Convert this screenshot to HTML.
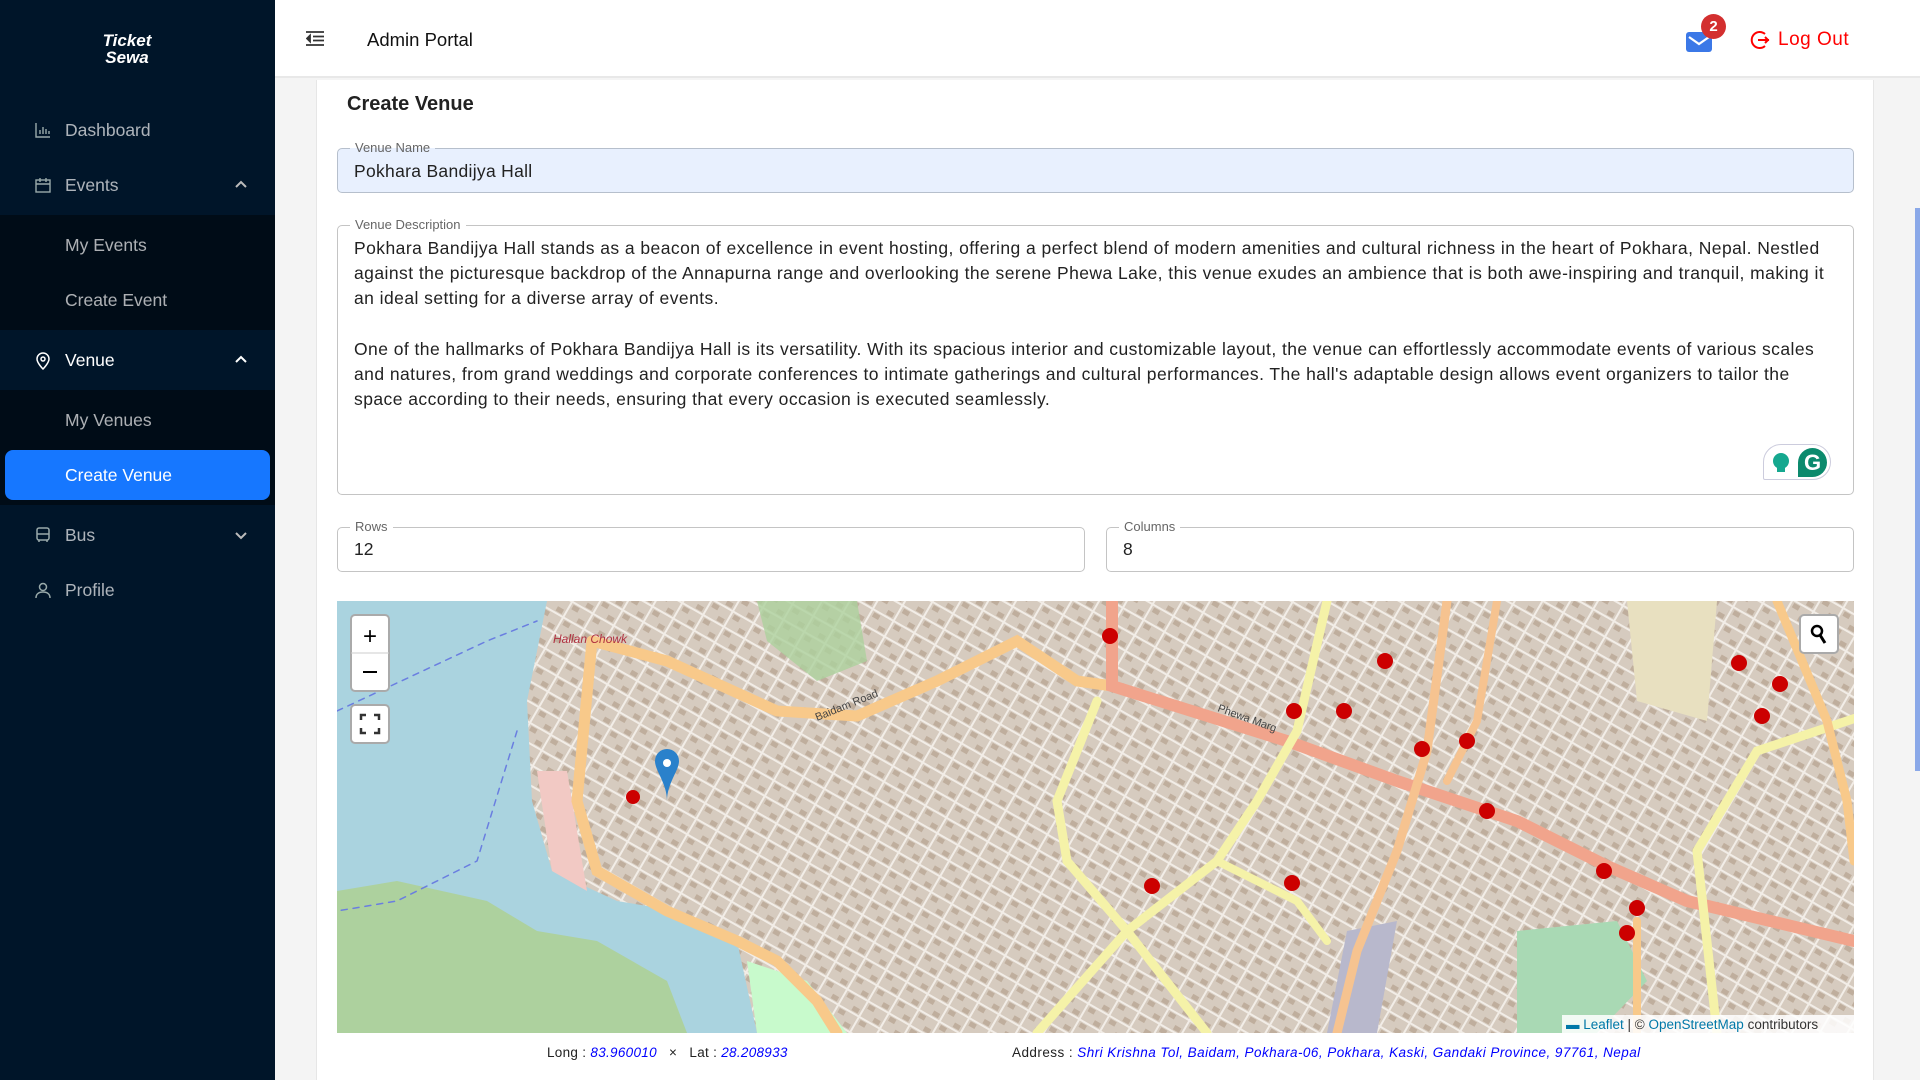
<!DOCTYPE html>
<html><head><meta charset="utf-8"><style>
*{box-sizing:border-box;margin:0;padding:0}
body{width:1920px;height:1080px;overflow:hidden;font-family:"Liberation Sans",sans-serif;background:#f4f4f4;position:relative}
.sb{position:absolute;left:0;top:0;width:275px;height:1080px;background:#001529}
.logo{position:absolute;left:97px;top:32px;color:#fff;font-style:italic;font-weight:bold;font-size:17px;line-height:17px;text-align:center;width:60px}
.mi{position:absolute;left:0;width:275px;height:55px;color:rgba(255,255,255,.68);font-size:17.5px;line-height:55px;padding-left:65px}
.mi svg{position:absolute;left:35px;top:19px}
.mi .ch{position:absolute;left:235px;top:22px}
.sub{position:absolute;left:0;width:275px;background:#000c17}
.hd{position:absolute;left:275px;top:0;width:1645px;height:78px;background:#fff;border-bottom:2px solid #e8e8e8}
.card{position:absolute;left:316px;top:80px;width:1558px;height:1000px;background:#fff;border-left:1px solid #e6e6e6;border-right:1px solid #e6e6e6}
.fld{position:absolute;border:1px solid #c4c4c4;border-radius:5px;font-size:17.5px;color:#222}
.lbl{position:absolute;top:-9px;left:12px;background:#fff;padding:0 5px;font-size:13px;color:#666;line-height:16px}
</style></head><body>
<div class="sb">
 <div class="logo">Ticket<br>Sewa</div>
 <div class="mi" style="top:103px"><svg width="16" height="16" viewBox="0 0 16 16" fill="none" stroke="#9aa" stroke-width="1.4"><path d="M1 1v14h14M5 12V8M8 12V5M11 12V7M14 12V9"/></svg>Dashboard</div>
 <div class="mi" style="top:158px"><svg width="16" height="16" viewBox="0 0 16 16" fill="none" stroke="#9aa" stroke-width="1.4"><rect x="1" y="3" width="14" height="12"/><path d="M1 7h14M5 1v4M11 1v4"/></svg>Events<svg class="ch" width="12" height="10" viewBox="0 0 12 10" fill="none" stroke="#bbb" stroke-width="2"><path d="M1 7l5-5 5 5"/></svg></div>
 <div class="sub" style="top:215px;height:115px">
  <div class="mi" style="top:3px">My Events</div>
  <div class="mi" style="top:58px">Create Event</div>
 </div>
 <div class="mi" style="top:333px;color:#fff"><svg width="16" height="18" viewBox="0 0 16 18" fill="none" stroke="#fff" stroke-width="1.5"><path d="M8 17s6-6 6-10A6 6 0 0 0 2 7c0 4 6 10 6 10z"/><circle cx="8" cy="7" r="2"/></svg>Venue<svg class="ch" width="12" height="10" viewBox="0 0 12 10" fill="none" stroke="#fff" stroke-width="2"><path d="M1 7l5-5 5 5"/></svg></div>
 <div class="sub" style="top:390px;height:115px">
  <div class="mi" style="top:3px">My Venues</div>
  <div style="position:absolute;left:5px;top:60px;width:265px;height:50px;background:#1677ff;border-radius:8px;color:#fff;font-size:17.5px;line-height:50px;padding-left:60px">Create Venue</div>
 </div>
 <div class="mi" style="top:508px"><svg width="16" height="16" viewBox="0 0 16 16" fill="none" stroke="#9aa" stroke-width="1.5"><rect x="2" y="1" width="12" height="12" rx="2"/><path d="M2 7h12M4 13v2M12 13v2"/></svg>Bus<svg class="ch" width="12" height="10" viewBox="0 0 12 10" fill="none" stroke="#bbb" stroke-width="2"><path d="M1 3l5 5 5-5"/></svg></div>
 <div class="mi" style="top:563px"><svg width="16" height="16" viewBox="0 0 16 16" fill="none" stroke="#9aa" stroke-width="1.5"><circle cx="8" cy="5" r="3.5"/><path d="M1 16c0-4 3-6 7-6s7 2 7 6"/></svg>Profile</div>
</div>
<div class="hd">
 <svg style="position:absolute;left:31px;top:31px" width="18" height="15" viewBox="0 0 18 15" fill="none" stroke="#333" stroke-width="1.8"><path d="M0 1h18M7 5.5h11M7 9.5h11M0 14h18"/><path d="M4 4.5L1 7.5 4 10.5z" fill="#333"/></svg>
 <div style="position:absolute;left:92px;top:29px;font-size:18.5px;color:#111">Admin Portal</div>
 <div style="position:absolute;left:1411px;top:32px;width:26px;height:20px;background:#3b78e7;border-radius:3px"><svg width="26" height="20"><path d="M3 5l10 7 10-7" fill="none" stroke="#fff" stroke-width="2.2"/></svg></div>
 <div style="position:absolute;left:1426px;top:14px;width:25px;height:25px;background:#d32f2f;border-radius:50%;color:#fff;font-size:15px;font-weight:bold;text-align:center;line-height:25px">2</div>
 <svg style="position:absolute;left:1473px;top:29px" width="22" height="22" viewBox="0 0 22 22" fill="none" stroke="#f00" stroke-width="2"><path d="M17 5A8 8 0 1 0 17 17"/><path d="M10 11h11M17 8l3 3-3 3"/></svg>
 <div style="position:absolute;left:1503px;top:29px;font-size:19px;color:#f00;letter-spacing:.5px">Log Out</div>
</div>
<div style="position:absolute;right:0;top:208px;width:5px;height:563px;background:#8aa8e8"></div>
<div class="card">
 <div style="position:absolute;left:30px;top:13px;font-size:20px;font-weight:bold;color:#222">Create Venue</div>
 <div class="fld" style="left:20px;top:68px;width:1517px;height:45px;background:#e8f0fe;border-color:#b6bfcc"><span class="lbl" style="background:linear-gradient(#fff 50%,#e8f0fe 50%)">Venue Name</span><div style="padding:12px 16px;letter-spacing:.3px">Pokhara Bandijya Hall</div></div>
 <div class="fld" style="left:20px;top:145px;width:1517px;height:270px"><span class="lbl">Venue Description</span>
  <div style="padding:10px 16px;line-height:25.2px;letter-spacing:.44px">Pokhara Bandijya Hall stands as a beacon of excellence in event hosting, offering a perfect blend of modern amenities and cultural richness in the heart of Pokhara, Nepal. Nestled against the picturesque backdrop of the Annapurna range and overlooking the serene Phewa Lake, this venue exudes an ambience that is both awe-inspiring and tranquil, making it an ideal setting for a diverse array of events.<br><br>One of the hallmarks of Pokhara Bandijya Hall is its versatility. With its spacious interior and customizable layout, the venue can effortlessly accommodate events of various scales and natures, from grand weddings and corporate conferences to intimate gatherings and cultural performances. The hall's adaptable design allows event organizers to tailor the space according to their needs, ensuring that every occasion is executed seamlessly.</div>
  <div style="position:absolute;left:1425px;top:218px;width:68px;height:36px;border:1px solid #ccd;border-radius:18px 18px 18px 2px;background:#fff">
   <div style="position:absolute;left:9px;top:8px;width:16px;height:16px;border-radius:50%;background:#15a88f"></div><div style="position:absolute;left:13px;top:22px;width:8px;height:5px;background:#15a88f"></div>
   <div style="position:absolute;left:34px;top:3px;width:29px;height:29px;border-radius:50% 50% 50% 0;background:#0c8a6d;color:#fff;font-weight:bold;font-size:22px;text-align:center;line-height:29px">G</div>
  </div>
 </div>
 <div class="fld" style="left:20px;top:447px;width:748px;height:45px"><span class="lbl">Rows</span><div style="padding:11px 16px">12</div></div>
 <div class="fld" style="left:789px;top:447px;width:748px;height:45px"><span class="lbl">Columns</span><div style="padding:11px 16px">8</div></div>
 <svg style="position:absolute;left:20px;top:521px" width="1517" height="432" viewBox="0 0 1517 432">
  <defs><pattern id="p" width="24" height="18" patternUnits="userSpaceOnUse" patternTransform="rotate(30)"><rect width="24" height="18" fill="#d6cbbf"/><path d="M0 9h24M12 0v18" stroke="#f2ede7" stroke-width="2"/><rect x="2" y="2" width="7" height="5" fill="#bfae9d"/><rect x="15" y="11" width="7" height="5" fill="#bfae9d"/></pattern></defs>
  <rect width="1517" height="432" fill="url(#p)"/>
  <path d="M0 0H210L190 100 195 200 215 270 280 300 340 310 400 340 420 432H0Z" fill="#aad3df"/>
  <path d="M0 290L60 280 150 300 200 330 260 340 330 380 350 432H0Z" fill="#add19e"/>
  <path d="M410 360L470 380 510 432H420Z" fill="#c8facc"/>
  <path d="M200 170L230 170 250 290 215 270Z" fill="#f2c9c4"/>
  <path d="M420 0L520 0 530 60 480 80 430 40Z" fill="#add19e" opacity=".8"/>
  <path d="M1180 330L1280 320 1310 380 1260 432H1180Z" fill="#a9d9b4"/>
  <path d="M1010 330L1060 320 1040 432H990Z" fill="#b8b8cc"/>
  <path d="M1290 0H1380L1370 120 1300 100Z" fill="#e8e0c0"/>
  <g fill="none" stroke-linecap="round">
   <path d="M255 40L330 60 440 110 520 115 600 80 680 40 740 80 775 85" stroke="#f8c98a" stroke-width="11"/>
   <path d="M255 40L240 200 260 270 330 310 400 340 440 360 480 400 500 432" stroke="#f8c98a" stroke-width="11"/>
   <path d="M775 0L775 85 950 140 1060 180 1180 220 1270 265 1350 300 1517 340" stroke="#f1a48c" stroke-width="12"/>
   <path d="M990 0L960 130 920 200 880 260 790 330 700 432" stroke="#f5f2a8" stroke-width="9"/>
   <path d="M760 100L720 200 730 260 790 330 870 432" stroke="#f5f2a8" stroke-width="9"/>
   <path d="M880 260L960 300 990 340" stroke="#f5f2a8" stroke-width="8"/>
   <path d="M1110 0L1090 150 1060 250 1020 350 1000 432" stroke="#f6c390" stroke-width="9"/>
   <path d="M1160 0L1140 120 1110 180" stroke="#f6c390" stroke-width="8"/>
   <path d="M1540 110L1420 150 1360 250 1380 432" stroke="#f5f2a8" stroke-width="9"/>
   <path d="M1440 0L1490 120 1510 200 1517 260" stroke="#f8c98a" stroke-width="9"/>
   <path d="M1300 320L1300 432" stroke="#f8c98a" stroke-width="8"/>
   <path d="M180 130L140 260 60 300 0 310M0 110L150 40 200 20" stroke="#6a7ee0" stroke-width="1.5" stroke-dasharray="6 6"/>
  </g>
  <g fill="#c00">
   <circle cx="773" cy="35" r="8"/><circle cx="957" cy="110" r="8"/><circle cx="1007" cy="110" r="8"/><circle cx="1048" cy="60" r="8"/><circle cx="1085" cy="148" r="8"/><circle cx="1130" cy="140" r="8"/><circle cx="1150" cy="210" r="8"/><circle cx="815" cy="285" r="8"/><circle cx="955" cy="282" r="8"/><circle cx="1267" cy="270" r="8"/><circle cx="1300" cy="307" r="8"/><circle cx="1290" cy="332" r="8"/><circle cx="1402" cy="62" r="8"/><circle cx="1443" cy="83" r="8"/><circle cx="1425" cy="115" r="8"/><circle cx="296" cy="196" r="7"/>
  </g>
  <path d="M318 160a12 12 0 0 1 24 0c0 10-12 22-12 40 0-18-12-30-12-40z" fill="#2a81cb"/><circle cx="330" cy="162" r="4" fill="#fff"/>
  <text x="216" y="42" font-size="12" fill="#b03040" font-style="italic" font-family="Liberation Sans">Hallan Chowk</text>
  <text x="480" y="120" font-size="11" fill="#444" font-family="Liberation Sans" transform="rotate(-22 480 120)">Baidam Road</text>
  <text x="880" y="110" font-size="11" fill="#444" font-family="Liberation Sans" transform="rotate(20 880 110)">Phewa Marg</text>
  <rect x="14" y="14" width="38" height="76" rx="4" fill="#fff" stroke="#aaa" stroke-width="2"/><path d="M14 52h38" stroke="#ccc"/>
  <text x="33" y="43" font-size="24" text-anchor="middle" font-family="Liberation Sans">+</text>
  <path d="M26 71h14" stroke="#000" stroke-width="2"/>
  <rect x="14" y="104" width="38" height="38" rx="4" fill="#fff" stroke="#aaa" stroke-width="2"/>
  <path d="M24 119v-5h5M37 114h5v5M42 127v5h-5M29 132h-5v-5" fill="none" stroke="#333" stroke-width="2.5"/>
  <rect x="1463" y="14" width="38" height="38" rx="4" fill="#fff" stroke="#aaa" stroke-width="2"/>
  <circle cx="1480" cy="30" r="5" fill="none" stroke="#000" stroke-width="2.5"/><path d="M1483 34l5 8" stroke="#000" stroke-width="3"/>
  <rect x="1225" y="414" width="292" height="18" fill="#fff" opacity=".85"/>
  <text x="1229" y="428" font-size="13.5" font-family="Liberation Sans" fill="#333"><tspan fill="#0078a8">▬ Leaflet</tspan> | © <tspan fill="#0078a8">OpenStreetMap</tspan> contributors</text>
 </svg>
 <div style="position:absolute;left:230px;top:965px;font-size:13.5px;color:#222;letter-spacing:.3px">Long : <i style="color:#00f">83.960010</i> &nbsp; × &nbsp; Lat : <i style="color:#00f">28.208933</i></div>
 <div style="position:absolute;left:695px;top:965px;font-size:13.5px;color:#222;letter-spacing:.45px">Address : <i style="color:#00f">Shri Krishna Tol, Baidam, Pokhara-06, Pokhara, Kaski, Gandaki Province, 97761, Nepal</i></div>
</div>
</body></html>
